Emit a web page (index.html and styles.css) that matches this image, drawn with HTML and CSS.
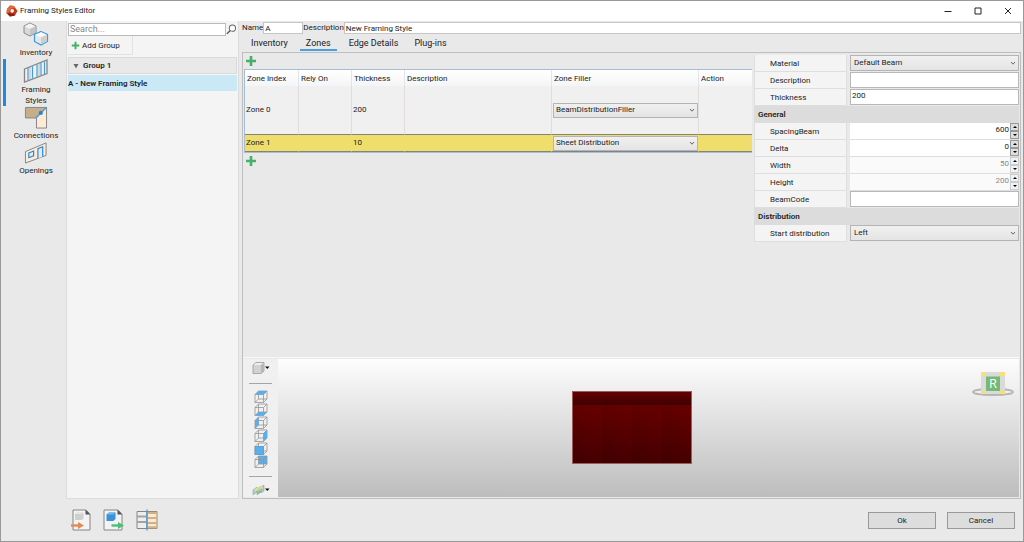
FILE: index.html
```html
<!DOCTYPE html>
<html lang="en">
<head>
<meta charset="utf-8">
<title>Framing Styles Editor</title>
<link rel="stylesheet" href="styles.css">
</head>
<body>
<svg class="defs" aria-hidden="true">
  <symbol id="plus" viewBox="0 0 12 12"><path d="M6 1v10M1 6h10" stroke="#45b068" stroke-width="2.6" fill="none"/></symbol>
  <symbol id="chevron" viewBox="0 0 8 8"><path d="M2 3l2 2.200L6 3" stroke="#666" stroke-width="1" fill="none"/></symbol>
  <symbol id="cube" viewBox="0 0 14 13"><path d="M1 4.500h8.500v8H1zM4.500 1H13v8H4.500zM1 4.500L4.500 1M9.500 4.500L13 1M9.500 12.500L13 9M1 12.500L4.500 9" stroke="#949494" stroke-width=".8" fill="none"/></symbol>
</svg>
<div class="window">
  <header class="titlebar">
    <svg class="logo" viewBox="0 0 12 12"><path d="M4 .5L8 1l3.500 5L9 10.500 4 11.500.5 8 1 4z" fill="#c5361c"/><path d="M4 .5L8 1l1 2-4 .5L2.500 8 .5 8 1 4z" fill="#e56b35"/><path d="M9 10.500L4 11.500.5 8l3 .5 4 0z" fill="#8f1d12"/><path d="M5 4l2.500.2L8 6.500 6 8 4.300 6.500z" fill="#fff"/></svg>
    <h1>Framing Styles Editor</h1>
    <button class="winbtn" aria-label="Minimize"><svg viewBox="0 0 8 8"><path d="M.5 4.500h7" stroke="#222" fill="none"/></svg></button>
    <button class="winbtn" aria-label="Maximize"><svg viewBox="0 0 8 8"><path d="M1 1h6v6H1z" stroke="#222" fill="none"/></svg></button>
    <button class="winbtn" aria-label="Close"><svg viewBox="0 0 8 8"><path d="M1 1l6 6M7 1L1 7" stroke="#222" fill="none"/></svg></button>
  </header>

  <div class="workspace">
    <nav class="sidebar">
      <button class="nav">
        <svg viewBox="0 0 26 24"><path d="M7 1l6 3v7l-6 3-6-3V4z" fill="#d9d9d9" stroke="#8a8a8a"/><path d="M1.500 4.200L7 7l5.500-2.800L7 1.500z" fill="#f4f4f4"/><path d="M7 7l5.500-2.800v6.600L7 13.500z" fill="#c4c4c4"/><path d="M18 9.500l6.500 3v7L18 23l-6.500-3.500v-7z" fill="#e6e6e6" stroke="#3d9be0" stroke-width="1.200"/><path d="M12.300 12.800L18 15.500l5.700-2.700L18 10.200z" fill="#fafafa"/><path d="M18 15.500l5.700-2.700v6.400L18 22.200z" fill="#cdcdcd"/></svg>
        <span>Inventory</span>
      </button>
      <button class="nav active">
        <svg viewBox="0 0 26 24"><path d="M1.500 10L24 1v13.500L1.500 23z" fill="#f1f1f1" stroke="#858585" stroke-width="1.300"/><path d="M5 9v12.200M9.500 7.200v12.300M14 5.500v12.300M18 3.800v12.400M21.500 2.500v12.400" stroke="#459bd8" stroke-width="1.200"/><path d="M7 8v12.500M16 4.500v12.600" stroke="#999" stroke-width=".6"/></svg>
        <span>Framing<br>Styles</span>
      </button>
      <button class="nav compact">
        <svg viewBox="0 0 26 24"><path d="M2 1.500h22L13 12.500H2z" fill="#c6ae8b" stroke="#858585"/><path d="M24 1.500v21.500H13.500V12z" fill="#fdebd7" stroke="#858585"/><path d="M24 1.500L13 12.500" stroke="#3d9be0" stroke-width="1.200"/><circle cx="18" cy="7.200" r="2.200" fill="#2588d6"/></svg>
        <span>Connections</span>
      </button>
      <button class="nav compact">
        <svg viewBox="0 0 26 24"><path d="M2 11l21.500-9v13L2 23z" fill="#fdebd7" stroke="#858585"/><path d="M5.500 12.500l5-2v5l-5 2z" fill="#e9e9e9" stroke="#2588d6" stroke-width="1.200"/><path d="M15 18V8l5-2v10.500" fill="#e9e9e9" stroke="#2588d6" stroke-width="1.200"/></svg>
        <span>Openings</span>
      </button>
    </nav>

    <aside class="groups">
      <div class="search">
        <input type="text" placeholder="Search..." aria-label="Search">
        <svg viewBox="0 0 12 12"><circle cx="7" cy="4.500" r="3.400" fill="#fff" stroke="#666" stroke-width="1.100"/><path d="M4.600 7L1 10.800" stroke="#555" stroke-width="1.500"/></svg>
      </div>
      <button class="add-group"><svg class="plus-small"><use href="#plus"/></svg>Add Group</button>
      <button class="group-head"><svg viewBox="0 0 6 6"><path d="M.5 1h5L3 5.500z" fill="#666"/></svg>Group 1</button>
      <div class="group-item">A - New Framing Style</div>
    </aside>

    <main class="main">
      <div class="fields">
        <label for="name">Name</label><input id="name" class="name" type="text" value="A">
        <label for="desc">Description</label><input id="desc" class="desc" type="text" value="New Framing Style">
      </div>
      <div class="tabs" role="tablist">
        <button role="tab">Inventory</button>
        <button role="tab" class="active" aria-selected="true">Zones</button>
        <button role="tab">Edge Details</button>
        <button role="tab">Plug-ins</button>
      </div>
      <div class="content">
        <div class="upper">
          <section class="zones">
            <button class="add" aria-label="Add zone above"><svg><use href="#plus"/></svg></button>
            <table>
              <colgroup><col class="c-first"><col class="c-s"><col class="c-s"><col class="c-l"><col class="c-l"><col></colgroup>
              <thead><tr><th>Zone Index</th><th>Rely On</th><th>Thickness</th><th>Description</th><th>Zone Filler</th><th>Action</th></tr></thead>
              <tbody>
                <tr class="tall"><td>Zone 0</td><td></td><td>200</td><td></td><td><div class="combo"><select aria-label="Zone 0 filler"><option>BeamDistributionFiller</option></select><svg><use href="#chevron"/></svg></div></td><td></td></tr>
                <tr class="selected"><td>Zone 1</td><td></td><td>10</td><td></td><td><div class="combo"><select aria-label="Zone 1 filler"><option>Sheet Distribution</option></select><svg><use href="#chevron"/></svg></div></td><td></td></tr>
              </tbody>
            </table>
            <button class="add" aria-label="Add zone below"><svg><use href="#plus"/></svg></button>
          </section>
          <section class="props">
            <div class="prop"><label for="p1">Material</label><div class="combo"><select id="p1"><option>Default Beam</option></select><svg><use href="#chevron"/></svg></div></div>
            <div class="prop"><label for="p2">Description</label><input id="p2" type="text"></div>
            <div class="prop"><label for="p3">Thickness</label><input id="p3" type="text" value="200"></div>
            <h2>General</h2>
            <div class="prop"><label for="p4">SpacingBeam</label><div class="spin strong"><input id="p4" type="text" value="600"><div class="steps"><button aria-label="Increase spacing"><svg viewBox="0 0 6 4"><path d="M1 3h4L3 1z"/></svg></button><button aria-label="Decrease spacing"><svg viewBox="0 0 6 4"><path d="M1 1h4L3 3z"/></svg></button></div></div></div>
            <div class="prop"><label for="p5">Delta</label><div class="spin strong"><input id="p5" type="text" value="0"><div class="steps"><button aria-label="Increase delta"><svg viewBox="0 0 6 4"><path d="M1 3h4L3 1z"/></svg></button><button aria-label="Decrease delta"><svg viewBox="0 0 6 4"><path d="M1 1h4L3 3z"/></svg></button></div></div></div>
            <div class="prop"><label for="p6">Width</label><div class="spin"><input id="p6" type="text" value="50" disabled><div class="steps"><button aria-label="Increase width"><svg viewBox="0 0 6 4"><path d="M1 3h4L3 1z"/></svg></button><button aria-label="Decrease width"><svg viewBox="0 0 6 4"><path d="M1 1h4L3 3z"/></svg></button></div></div></div>
            <div class="prop"><label for="p7">Height</label><div class="spin"><input id="p7" type="text" value="200" disabled><div class="steps"><button aria-label="Increase height"><svg viewBox="0 0 6 4"><path d="M1 3h4L3 1z"/></svg></button><button aria-label="Decrease height"><svg viewBox="0 0 6 4"><path d="M1 1h4L3 3z"/></svg></button></div></div></div>
            <div class="prop"><label for="p8">BeamCode</label><input id="p8" type="text"></div>
            <h2>Distribution</h2>
            <div class="prop"><label for="p9">Start distribution</label><div class="combo"><select id="p9"><option>Left</option></select><svg><use href="#chevron"/></svg></div></div>
          </section>
        </div>
        <div class="lower">
          <div class="viewtools">
            <button class="drop" aria-label="Display mode"><svg viewBox="0 0 18 14"><path d="M1 4l3-2.500h8V10l-3 2.500H1z" fill="#d2d2d2" stroke="#9a9a9a" stroke-width=".8"/><path d="M1.500 4l2.700-2h7.300L9 4z" fill="#eee"/><path d="M9 4l2.500-2v7.800L9 12z" fill="#b5b5b5"/><path d="M13 5.500h4.500L15.300 8z" fill="#111"/></svg></button>
            <hr>
            <div class="cubes">
              <button aria-label="Top view"><svg viewBox="0 0 14 13"><use href="#cube" width="14" height="13"/><path d="M1 4.500L4.500 1H13L9.500 4.500z" fill="#5aaeea"/></svg></button>
              <button aria-label="Bottom view"><svg viewBox="0 0 14 13"><use href="#cube" width="14" height="13"/><path d="M1 12.500L4.500 9H13l-3.500 3.500z" fill="#5aaeea"/></svg></button>
              <button aria-label="Left view"><svg viewBox="0 0 14 13"><use href="#cube" width="14" height="13"/><path d="M1 4.500L4.500 1v8L1 12.500z" fill="#5aaeea"/></svg></button>
              <button aria-label="Right view"><svg viewBox="0 0 14 13"><use href="#cube" width="14" height="13"/><path d="M9.500 4.500L13 1v8l-3.500 3.500z" fill="#5aaeea"/></svg></button>
              <button aria-label="Front view"><svg viewBox="0 0 14 13"><use href="#cube" width="14" height="13"/><path d="M1 4.500h8.500v8H1z" fill="#5aaeea" stroke="#4a9bd4" stroke-width=".6"/></svg></button>
              <button aria-label="Back view"><svg viewBox="0 0 14 13"><path d="M4.500 1H13v8H4.500z" fill="#5aaeea"/><use href="#cube" width="14" height="13"/></svg></button>
            </div>
            <hr>
            <button class="drop" aria-label="Section view"><svg viewBox="0 0 18 14"><path d="M1 7l4-3v5l-4 3zM5 6l4-3v6l-4 3zM9 4l3-2v6l-3 2z" fill="#a8cbd6" stroke="#8fa99c" stroke-width=".6"/><path d="M2 7l3-2.300 2 1.300-3 2.300zM7 4.300L9 3l2 1.500-2.500 2z" fill="#efe36c"/><path d="M5 9.500l3-2 1 1.500-3 2z" fill="#83bd8a"/><path d="M13 5.500h4.500L15.300 8z" fill="#111"/></svg></button>
          </div>
          <div class="viewport">
            <div class="model"><div class="rail"></div><div class="panel"></div><div class="panel"></div><div class="panel"></div><div class="panel"></div></div>
            <div class="compass">
              <svg viewBox="0 0 44 28"><ellipse cx="22" cy="21" rx="20" ry="3" fill="#eee" stroke="#b5b5b5" stroke-width="1.800"/><path d="M10 1h24v22H10z" fill="#dadada"/><path d="M10 1h5v4h-5zM29 1h5v4h-5zM10 20h5v3h-5zM29 20h5v3h-5z" fill="#f8df79"/><path d="M15 5.500h14v14.500H15z" fill="#74b974"/></svg>
              <span>R</span>
            </div>
          </div>
        </div>
      </div>
    </main>
  </div>

  <footer class="footer">
    <button class="tool" aria-label="Import"><svg viewBox="0 0 22 22"><path d="M3 1h13l4 4v16H3z" fill="#f3f3f3" stroke="#858585"/><path d="M15.500.8v4.700h4.700z" fill="#555"/><path d="M5 5l2-1.500h6.500v6L11.500 11H5z" fill="#cfcfcf"/><path d="M5 5h6.500l2-1.500H7z" fill="#e8e8e8"/><path d="M1 16.500h8" stroke="#e18a55" stroke-width="2.400"/><path d="M8 13l6 3.500L8 20z" fill="#e18a55"/></svg></button>
    <button class="tool" aria-label="Export"><svg viewBox="0 0 22 22"><path d="M1 1h14l4 4v16H1z" fill="#f3f3f3" stroke="#858585"/><path d="M14.500.8v4.700h4.700z" fill="#555"/><path d="M3.500 5.500L6 3.500h6.500v6.500l-2.200 2H3.500z" fill="#3c91d8"/><path d="M3.500 5.500h6.800l2.200-2H6z" fill="#74b9ef"/><path d="M8.500 16.500h8" stroke="#4abf76" stroke-width="2.400"/><path d="M15 13l6 3.500-6 3.500z" fill="#4abf76"/></svg></button>
    <button class="tool" aria-label="Compare"><svg viewBox="0 0 22 22"><path d="M1 2.500h10v17H1z" fill="#eee" stroke="#858585"/><path d="M11 2.500h10v17H11z" fill="#fde9cf" stroke="#9a8a74"/><path d="M1 7.500h10M1 13h10" stroke="#a3a3a3" stroke-width="2"/><path d="M11 4h10M11 9h10M11 14h10M11 18.300h10" stroke="#cbb18c" stroke-width="2"/><path d="M11 .5v21" stroke="#3d9be0" stroke-width="1.200"/></svg></button>
    <span class="spacer"></span>
    <button class="action">Ok</button>
    <button class="action">Cancel</button>
  </footer>
</div>
</body>
</html>
```
FILE: styles.css
```css
* { box-sizing: border-box; }
body { margin: 0; font: 8px/10px Roboto, "Open Sans", sans-serif; color: #222; background: #e9e9e9; }
button, input, select { font: inherit; color: inherit; margin: 0; padding: 0; border: 0; border-radius: 0; background: none; outline: 0; min-width: 0; }
svg { display: block; flex: none; }
h1, h2 { margin: 0; font-size: inherit; }
.defs { position: absolute; width: 0; height: 0; }

.window { display: flex; flex-direction: column; min-height: 100vh; border: 1px solid #999; }
.titlebar { display: flex; align-items: center; height: 20px; padding-left: 5px; background: #fff; }
.logo { width: 12px; height: 12px; margin-right: 2px; }
.titlebar h1 { flex: 1; font-weight: 400; }
.winbtn { width: 30px; height: 18px; display: grid; place-items: center; }
.winbtn svg { width: 8px; height: 8px; }

.workspace { flex: 1; display: flex; min-height: 0; }
.sidebar { width: 65px; display: flex; flex-direction: column; padding-top: 1px; }
.nav { display: flex; flex-direction: column; align-items: center; margin-left: 2px; border-left: 3px solid transparent; line-height: 11px; }
.nav span { padding-top: 1px; }
.nav.active { border-color: #1e88e5; margin-top: 1px; }
.nav svg { width: 26px; height: 24px; }
.nav.compact svg { height: 23px; }

.groups { width: 173px; padding: 1px; background: #f4f4f4; border: 1px solid #dcdcdc; border-top: 0; }
.search { display: flex; align-items: center; justify-content: space-between; height: 14px; }
.search input { width: 160px; height: 13px; padding: 0 1px; font-size: 9px; background: #fff; border: 1px solid #bbb; }
.search input::placeholder { color: #888; opacity: 1; }
.search svg { width: 11px; height: 11px; }
.add-group { display: flex; align-items: center; gap: 2px; width: 65px; height: 19px; padding: 1px 0 0 3px; border: 1px solid #e2e2e2; border-width: 0 1px 1px 0; }
.plus-small { width: 9px; height: 9px; }
.group-head { display: flex; align-items: center; gap: 4px; width: 100%; height: 17px; margin: 2px 0 1px; padding-left: 4px; background: #e9e9e9; border: 1px solid #dadada; font-weight: 600; }
.group-head svg { width: 6px; height: 6px; }
.group-item { height: 16px; line-height: 17px; background: #cbe8f6; font-weight: 600; }

.main { flex: 1; min-width: 0; display: flex; flex-direction: column; padding: 1px 2px 0 3px; }
.fields { display: flex; align-items: center; height: 12px; line-height: 12px; }
.fields input { height: 12px; padding: 1px 1px 0; line-height: 9px; background: #fff; border: 1px solid #c6c6c6; }
.fields .name { width: 40px; }
.fields .desc { flex: 1; }
.tabs { display: flex; gap: 8px; height: 18px; padding-left: 5px; font-size: 9px; }
.tabs button { padding: 3px 4px 0; height: 17px; border-bottom: 2px solid transparent; }
.tabs .active { padding: 3px 6px 0; border-color: #4a9fe0; }
.content { flex: 1; display: flex; flex-direction: column; border: 1px solid #bebebe; }
.upper { flex: 1; display: flex; }
.zones { flex: 1; min-width: 0; padding-left: 1px; }
.add { display: grid; align-items: center; width: 16px; height: 16px; padding-left: 1px; }
.add svg { width: 12px; height: 12px; }

table { width: 100%; table-layout: fixed; border-collapse: separate; border-spacing: 0; background: #f0f0f0; border: 1px solid #a6bed2; border-right: 0; }
.c-first { width: 54px; }
.c-s { width: 53px; }
.c-l { width: 147px; }
th { height: 16px; padding: 1px 2px 0; text-align: left; font-weight: 400; background: linear-gradient(#fff, #f4f5f7); border-right: 1px solid #e4e4e6; }
td { padding: 0 0 0 1px; border-right: 1px solid #e2dcdc; }
th:last-child, td:last-child { border-right: 0; }
.tall td { height: 48px; }
.selected td { height: 18px; background: #efde6c; border-right-color: #efde6c; border-top: 1px solid #85827a; border-bottom: 1px solid #85827a; }
.combo { display: grid; align-items: center; min-width: 0; height: 15px; }
.combo select { grid-area: 1 / 1; appearance: none; width: 100%; height: 100%; padding: 0 3px; background: linear-gradient(#f0f0f0, #e4e4e4); border: 1px solid #b4b4b4; }
.combo svg { grid-area: 1 / 1; justify-self: end; width: 8px; height: 8px; margin-right: 2px; pointer-events: none; }
td .combo select { padding-left: 2px; }

.props { width: 268px; padding: 2px 1px 0 2px; }
.prop { display: grid; grid-template-columns: 93px 1fr; column-gap: 3px; height: 17px; }
.prop label { padding: 4px 0 0 15px; background: #f4f4f4; border: 1px solid #dedede; border-top: 0; }
.prop > input { height: 16px; padding: 0 1px 3px; background: #fff; border: 1px solid #b8b8b8; }
.prop .combo { height: 16px; }
.props h2 { height: 17px; padding-left: 4px; line-height: 17px; background: #dcdcdc; font-weight: 600; }
.spin { display: flex; height: 17px; background: #fff; border-bottom: 1px solid #dedede; }
.spin input { flex: 1; height: 16px; padding: 0 1px 4px; text-align: right; }
.spin input:disabled { color: #888; background: #fafafa; }
.steps { display: flex; flex-direction: column; width: 9px; }
.steps button { flex: 1; display: grid; place-items: center; border: 1px solid #ccc; background: #f2f2f2; }
.steps svg { width: 6px; height: 4px; }
.strong .steps button { border-color: #999; background: #dedede; }

.lower { display: flex; height: 141px; padding: 1px 1px 1px 0; border-top: 1px solid #f8f8f8; }
.viewtools { width: 35px; display: flex; flex-direction: column; align-items: center; padding: 2px 0 1px; background: #f0f0f0; }
.viewtools hr { width: 23px; margin: 8px 0 6px; border: 0; border-top: 1px solid #a6a6a6; }
.drop svg { width: 18px; height: 14px; }
.cubes { display: flex; flex-direction: column; }
.cubes svg { width: 14px; height: 13px; }
.viewport { flex: 1; display: flex; align-items: flex-start; justify-content: center; position: relative; padding-top: 32px; padding-right: 34px; background: linear-gradient(#fdfdfd, #bdbdbd); }
.model { display: grid; grid-template: 13px 58px / repeat(4, 1fr); width: 120px; border: 1px solid #9b5c5c; background: #500000; }
.rail { grid-column: 1 / -1; background: linear-gradient(#640000, #3e0000); }
.panel { background: linear-gradient(200deg, #680000, #560000 45%, #400000); }
.compass { position: absolute; top: 12px; right: 4px; display: grid; place-items: start center; }
.compass svg { grid-area: 1 / 1; width: 44px; height: 28px; }
.compass span { grid-area: 1 / 1; font-family: "Open Sans", sans-serif; font-size: 13px; line-height: 25px; color: #fff; }

.footer { display: flex; align-items: center; gap: 11px; height: 42px; padding: 0 8px 0 69px; }
.tool { width: 22px; height: 22px; }
.tool svg { width: 22px; height: 22px; }
.spacer { flex: 1; }
.action { width: 68px; height: 17px; padding-top: 1px; background: #dddddd; border: 1px solid #999; }
```
